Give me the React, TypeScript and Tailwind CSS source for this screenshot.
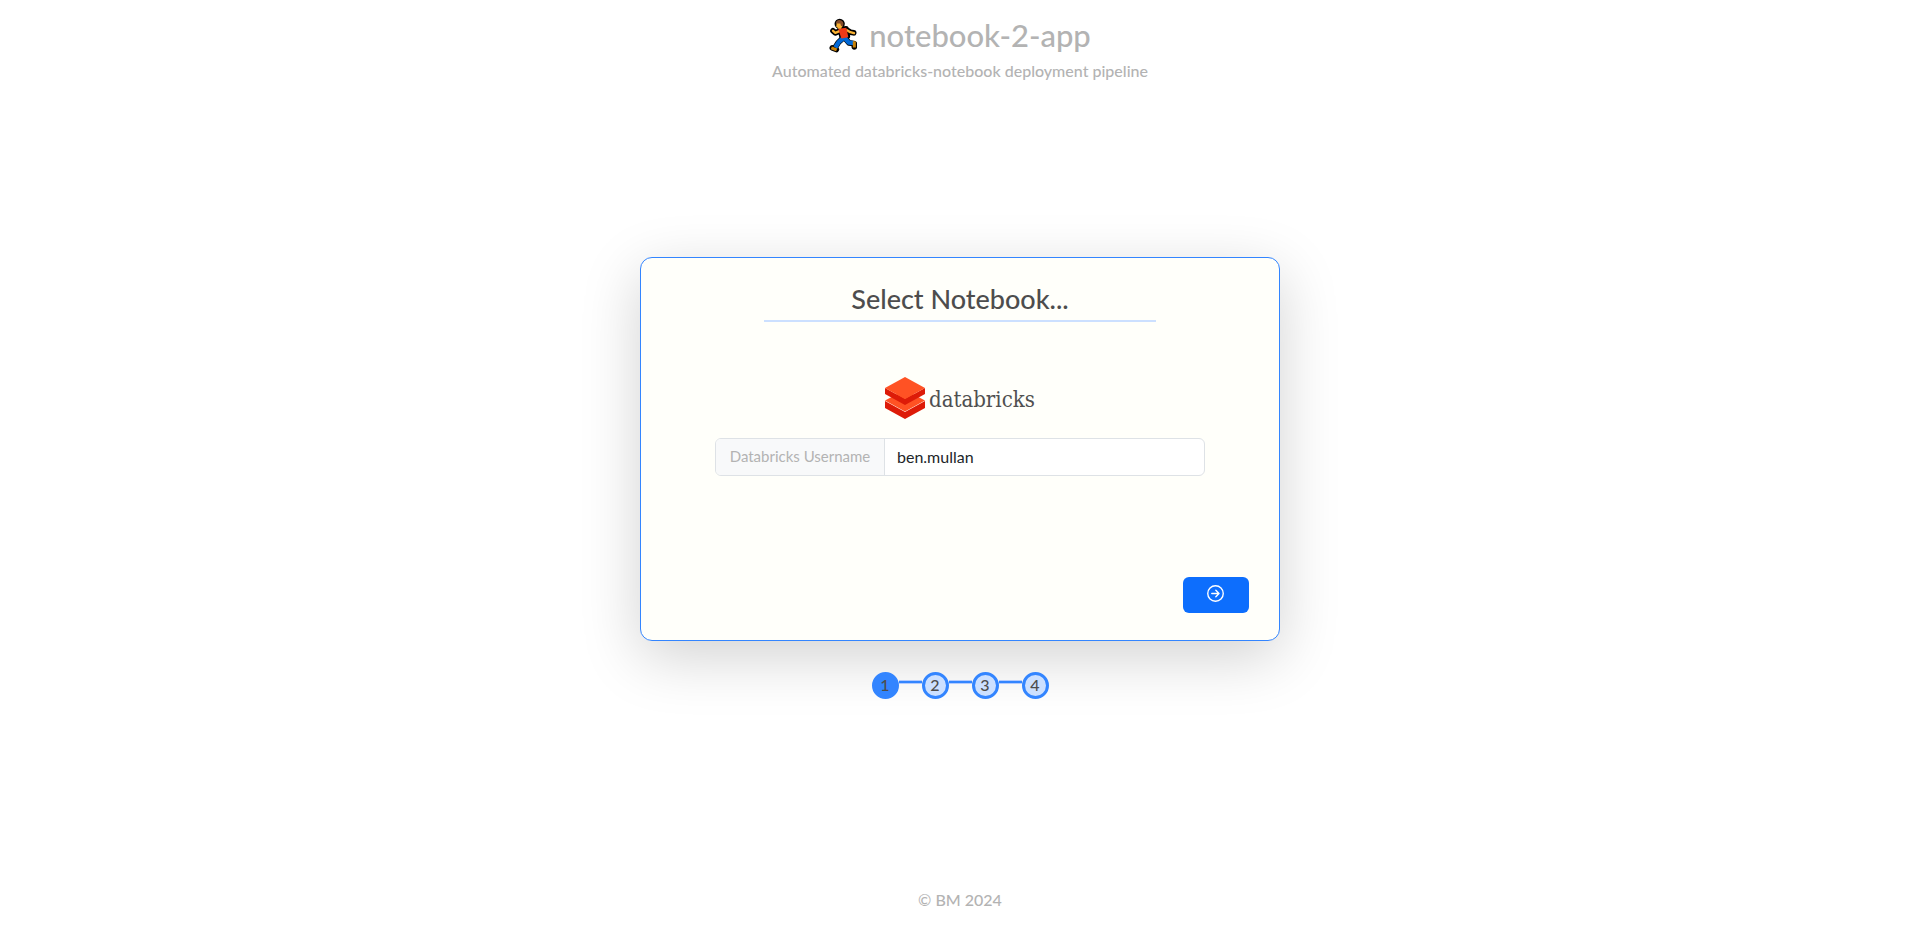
import { Fragment, useState } from "react";

const steps = [1, 2, 3, 4];

function Runner() {
  return (
    <svg viewBox="0 0 84 104" className="h-[35px] w-7" aria-hidden="true">
      <g fill="none" stroke="#000" strokeWidth="17" strokeLinejoin="round" strokeLinecap="round">
        <circle cx="32" cy="17" r="7" />
        <path d="M34 35 51 32 55 54 40 58Z" />
        <path d="M33 38 19 44 12 38M54 36 64 42 74 44" />
        <path d="M42 60 28 73 20 86M48 60 60 74 74 76" />
        <path d="M10 89 22 94M76 77V86" />
      </g>
      <g fill="none" strokeLinejoin="round">
        <path d="M33 38 19 44 12 38M54 36 64 42 75 45" stroke="#f9b233" strokeWidth="7" strokeLinecap="round" />
        <path d="M45 58 29 72 19 88M46 58 59 73 74 75" stroke="#0067d5" strokeWidth="13" />
        <path d="M7 89 23 95M76 69V88" stroke="#c98208" strokeWidth="9" />
      </g>
      <path d="M28 32 52 29 58 57 37 61Z" fill="#f03a17" />
      <path d="M23 12h17v12l-4 8h-8l-6-8Z" fill="#f9b233" />
      <path d="M21 16C20 8 27 4 34 6c9 2 12 11 7 19l-5-2-2-7Z" fill="#834b2b" />
    </svg>
  );
}

function DatabricksLogo() {
  return (
    <svg viewBox="0 0 152 44" className="h-11 w-[152px]" role="img" aria-label="databricks">
      <path d="M1 25 21 36 41 25V32L21 43 1 32Z" fill="#dd1b08" />
      <path d="M1 24.500 21 14 41 24.500 21 35.500Z" fill="#ff5224" />
      <path d="M1 12 21 23 41 12V18L21 29 1 18Z" fill="#dd1b08" />
      <path d="M1 12 21 1 41 12 21 23Z" fill="#ff5224" />
      <text x="45" y="31" fontSize="22" fill="#505050" className="font-['DejaVu_Serif_Condensed','DejaVu_Serif',serif]">
        databricks
      </text>
    </svg>
  );
}

export default function App() {
  const [username, setUsername] = useState("ben.mullan");
  return (
    <div className="flex min-h-screen flex-col items-center bg-white font-['Lato',sans-serif] text-base text-[#b3b3b3]">
      <header className="flex flex-col items-center pt-4">
        <h1 className="flex items-center gap-3 text-[31px] leading-[38px] font-medium">
          <Runner />
          notebook-2-app
        </h1>
        <p className="mt-[5px] text-base leading-6 font-medium">Automated databricks-notebook deployment pipeline</p>
      </header>

      <main className="flex w-full flex-1 flex-col items-center justify-center pb-4">
        <form
          className="flex min-h-96 w-1/3 min-w-[560px] flex-col items-center rounded-xl border border-[#3385ff] bg-[#fffffa] px-[30px] pt-6 pb-[27px] shadow-[0_16px_60px_rgba(0,0,0,0.18)]"
          onSubmit={(e) => e.preventDefault()}
        >
          <h2 className="w-[392px] border-b-2 border-[#cce0ff] pb-1 text-center text-[27px] leading-[34px] font-medium text-[#4d4d4d]">
            Select Notebook...
          </h2>
          <div className="mt-[54px]">
            <DatabricksLogo />
          </div>
          <div className="mt-[18px] flex h-[38px] w-[490px] overflow-hidden rounded-md border border-[#dee2e6] bg-white">
            <label
              htmlFor="username"
              className="flex w-[169px] items-center justify-center border-r border-[#dee2e6] bg-[#f8f9fa] text-[15px] whitespace-nowrap"
            >
              Databricks Username
            </label>
            <input
              id="username"
              type="text"
              value={username}
              onChange={(e) => setUsername(e.target.value)}
              className="min-w-0 flex-1 px-3 text-[#212529] outline-none"
            />
          </div>
          <button
            type="submit"
            aria-label="Next"
            className="mt-auto flex h-9 w-[66px] items-center justify-center self-end rounded-md bg-[#0d6efd] pb-0.5 text-white"
          >
            <svg viewBox="0 0 16 16" className="size-[17px]" fill="none" stroke="currentColor" strokeWidth="1.3" aria-hidden="true">
              <circle cx="8" cy="8" r="7.300" />
              <path d="M4.500 8H11M8.300 5 11.300 8 8.300 11" strokeLinecap="round" strokeLinejoin="round" />
            </svg>
          </button>
        </form>

        <ol className="mt-[31px] flex items-start text-[#4d4d4d]">
          {steps.map((n) => (
            <Fragment key={n}>
              {n > 1 && <li aria-hidden="true" className="mt-2 h-1 w-[23px] border-y border-[#b3ccff] bg-[#3385ff]" />}
              <li
                className={
                  n === 1
                    ? "flex size-[27px] items-center justify-center rounded-full border-3 border-[#3385ff] bg-[#3385ff] font-medium"
                    : "flex size-[27px] items-center justify-center rounded-full border-3 border-[#3385ff] bg-[#cce0ff] font-medium"
                }
              >
                {n}
              </li>
            </Fragment>
          ))}
        </ol>
      </main>

      <footer className="pb-[17px] leading-6 font-medium">© BM 2024</footer>
    </div>
  );
}
